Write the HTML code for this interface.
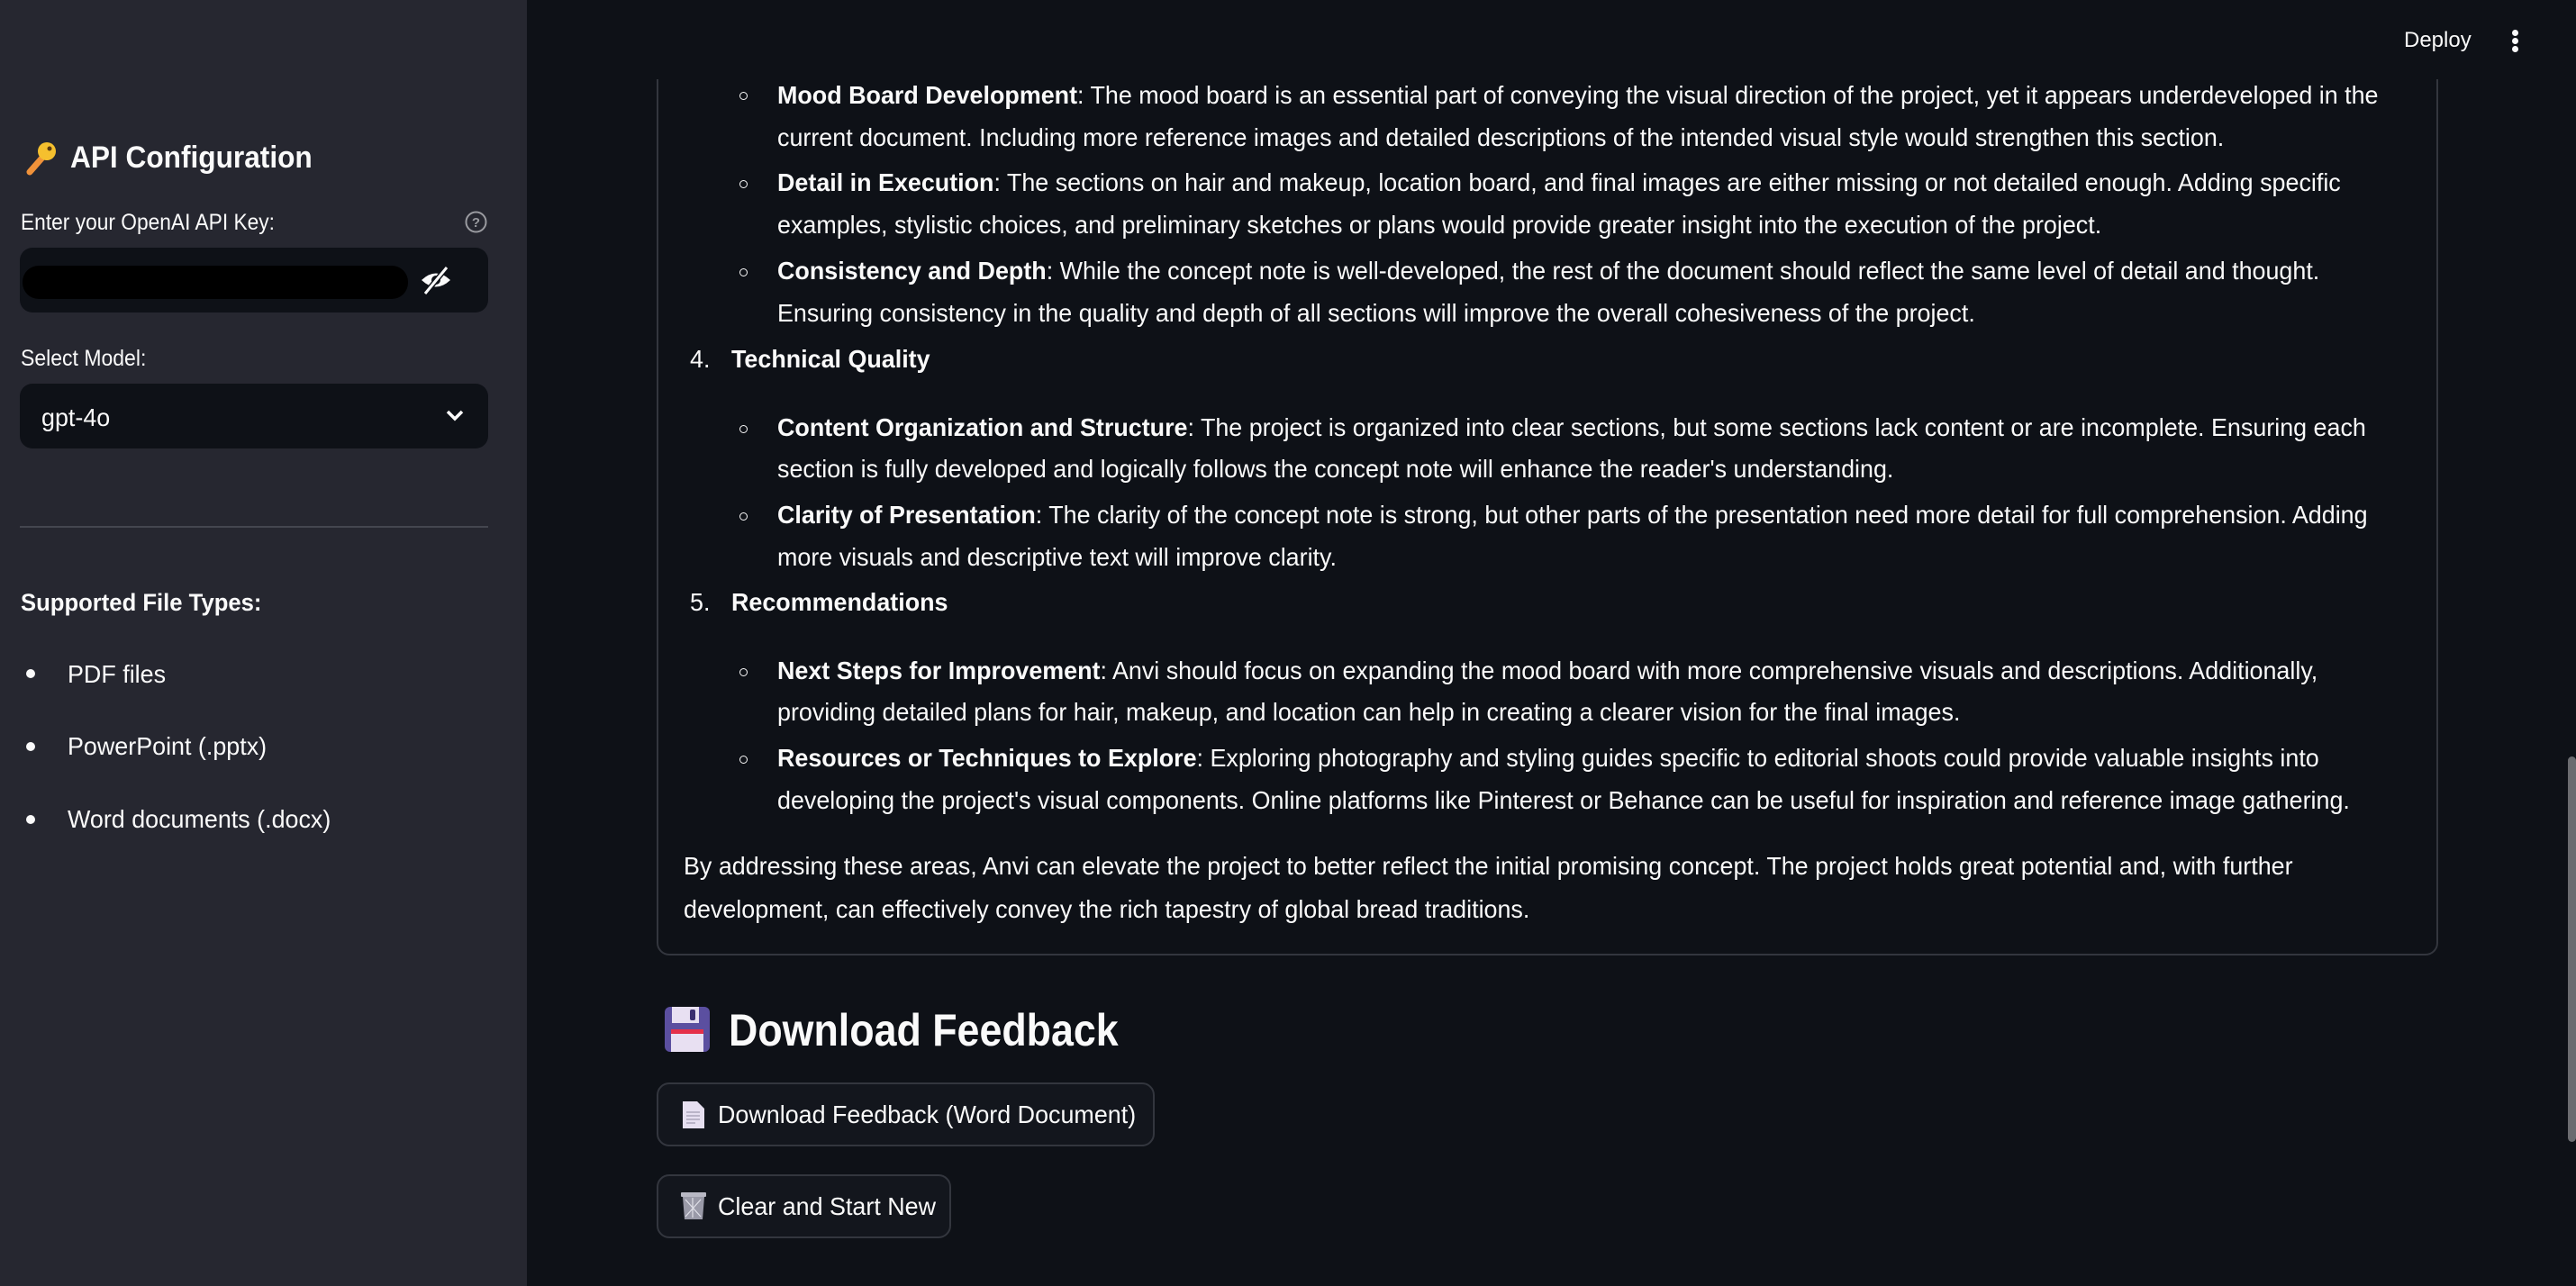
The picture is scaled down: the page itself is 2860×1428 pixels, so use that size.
<!DOCTYPE html>
<html><head><meta charset="utf-8"><style>
*{margin:0;padding:0;box-sizing:border-box}
body{width:2860px;height:1428px;overflow:hidden;background:#0e1117;color:#fafafa;font-family:"Liberation Sans",sans-serif;position:relative}
.a{position:absolute;white-space:nowrap}
.l{position:absolute;white-space:nowrap;font-size:28px;line-height:40px;transform-origin:0 50%;transform:scaleX(.96)}
b{font-weight:bold}
.side{position:absolute;left:0;top:0;width:585px;height:1428px;background:#262730}
.card{position:absolute;left:729px;top:0;width:1978px;height:1061px;border:2px solid #33363e;border-radius:14px}
.hdr{position:absolute;left:585px;top:0;width:2275px;height:88px;background:#0e1117}
.circ{position:absolute;width:9px;height:9px;border:1.5px solid #fafafa;border-radius:50%}
.btn{position:absolute;border:2px solid #33363e;border-radius:14px;background:#13161d}
.sc{transform-origin:0 50%;transform:scaleX(.96)}
</style></head><body>
<div class="side"></div>
<svg class="a" style="left:27px;top:155px" width="36" height="40" viewBox="0 0 36 40"><path d="M6 36 L20 20" stroke="#f0923a" stroke-width="7" stroke-linecap="round"/><circle cx="25" cy="13" r="10" fill="#f5c02e"/><circle cx="28" cy="10" r="2.5" fill="#5a3a10"/></svg>
<div class="a sc" style="left:78px;top:153px;font-size:34px;font-weight:bold;line-height:44px;transform:scaleX(.93)">API Configuration</div>
<div class="a sc" style="left:23px;top:232px;font-size:25px;line-height:30px;transform:scaleX(.91)">Enter your OpenAI API Key:</div>
<svg class="a" style="left:516px;top:234px" width="25" height="25" viewBox="0 0 25 25"><circle cx="12.5" cy="12.5" r="11" fill="none" stroke="#9a9ba0" stroke-width="2"/><text x="12.5" y="18" text-anchor="middle" font-family="Liberation Sans" font-size="15" font-weight="bold" fill="#9a9ba0">?</text></svg>
<div class="a" style="left:22px;top:275px;width:520px;height:72px;background:#0e1117;border-radius:14px"></div>
<div class="a" style="left:25px;top:295px;width:428px;height:37px;background:#000;border-radius:18px"></div>
<svg class="a" style="left:466px;top:294px" width="36" height="34" viewBox="0 0 36 34"><path d="M2 17 Q18 2 34 17 Q18 32 2 17Z" fill="#fafafa"/><circle cx="18" cy="17" r="5" fill="#0e1117"/><path d="M6 32 L30 3" stroke="#0e1117" stroke-width="6"/><path d="M6 32 L30 3" stroke="#fafafa" stroke-width="3"/></svg>
<div class="a sc" style="left:23px;top:383px;font-size:25px;line-height:30px;transform:scaleX(.92)">Select Model:</div>
<div class="a" style="left:22px;top:426px;width:520px;height:72px;background:#0e1117;border-radius:14px"></div>
<div class="a sc" style="left:46px;top:444px;font-size:28px;line-height:40px">gpt-4o</div>
<svg class="a" style="left:494px;top:453px" width="22" height="16" viewBox="0 0 22 16"><path d="M3 4 L11 12 L19 4" fill="none" stroke="#fafafa" stroke-width="3.5"/></svg>
<div class="a" style="left:22px;top:584px;width:520px;height:2px;background:#44464f"></div>
<div class="a sc" style="left:23px;top:652px;font-size:27px;font-weight:bold;line-height:34px;transform:scaleX(.95)">Supported File Types:</div>
<div class="a" style="left:29px;top:743px;width:10px;height:10px;border-radius:50%;background:#fafafa"></div>
<div class="a sc" style="left:75px;top:729px;font-size:28px;line-height:40px">PDF files</div>
<div class="a" style="left:29px;top:824px;width:10px;height:10px;border-radius:50%;background:#fafafa"></div>
<div class="a sc" style="left:75px;top:809px;font-size:28px;line-height:40px">PowerPoint (.pptx)</div>
<div class="a" style="left:29px;top:905px;width:10px;height:10px;border-radius:50%;background:#fafafa"></div>
<div class="a sc" style="left:75px;top:890px;font-size:28px;line-height:40px">Word documents (.docx)</div>

<div class="card"></div>
<div class="hdr"></div>
<div class="a" style="left:2669px;top:30px;font-size:24px;line-height:30px">Deploy</div>
<div class="a" style="left:2789px;top:33px;width:7px;height:7px;border-radius:50%;background:#fafafa"></div>
<div class="a" style="left:2789px;top:42px;width:7px;height:7px;border-radius:50%;background:#fafafa"></div>
<div class="a" style="left:2789px;top:51px;width:7px;height:7px;border-radius:50%;background:#fafafa"></div>

<div class="circ" style="left:821px;top:102px"></div>
<div class="l" style="left:863px;top:86px"><b>Mood Board Development</b>: The mood board is an essential part of conveying the visual direction of the project, yet it appears underdeveloped in the</div>
<div class="l" style="left:863px;top:133px">current document. Including more reference images and detailed descriptions of the intended visual style would strengthen this section.</div>
<div class="circ" style="left:821px;top:200px"></div>
<div class="l" style="left:863px;top:183px"><b>Detail in Execution</b>: The sections on hair and makeup, location board, and final images are either missing or not detailed enough. Adding specific</div>
<div class="l" style="left:863px;top:230px">examples, stylistic choices, and preliminary sketches or plans would provide greater insight into the execution of the project.</div>
<div class="circ" style="left:821px;top:298px"></div>
<div class="l" style="left:863px;top:281px"><b>Consistency and Depth</b>: While the concept note is well-developed, the rest of the document should reflect the same level of detail and thought.</div>
<div class="l" style="left:863px;top:328px">Ensuring consistency in the quality and depth of all sections will improve the overall cohesiveness of the project.</div>
<div class="l" style="left:766px;top:379px">4.</div>
<div class="l" style="left:812px;top:379px"><b>Technical Quality</b></div>
<div class="circ" style="left:821px;top:472px"></div>
<div class="l" style="left:863px;top:455px"><b>Content Organization and Structure</b>: The project is organized into clear sections, but some sections lack content or are incomplete. Ensuring each</div>
<div class="l" style="left:863px;top:501px">section is fully developed and logically follows the concept note will enhance the reader's understanding.</div>
<div class="circ" style="left:821px;top:569px"></div>
<div class="l" style="left:863px;top:552px"><b>Clarity of Presentation</b>: The clarity of the concept note is strong, but other parts of the presentation need more detail for full comprehension. Adding</div>
<div class="l" style="left:863px;top:599px">more visuals and descriptive text will improve clarity.</div>
<div class="l" style="left:766px;top:649px">5.</div>
<div class="l" style="left:812px;top:649px"><b>Recommendations</b></div>
<div class="circ" style="left:821px;top:742px"></div>
<div class="l" style="left:863px;top:725px"><b>Next Steps for Improvement</b>: Anvi should focus on expanding the mood board with more comprehensive visuals and descriptions. Additionally,</div>
<div class="l" style="left:863px;top:771px">providing detailed plans for hair, makeup, and location can help in creating a clearer vision for the final images.</div>
<div class="circ" style="left:821px;top:839px"></div>
<div class="l" style="left:863px;top:822px"><b>Resources or Techniques to Explore</b>: Exploring photography and styling guides specific to editorial shoots could provide valuable insights into</div>
<div class="l" style="left:863px;top:869px">developing the project's visual components. Online platforms like Pinterest or Behance can be useful for inspiration and reference image gathering.</div>
<div class="l" style="left:759px;top:942px">By addressing these areas, Anvi can elevate the project to better reflect the initial promising concept. The project holds great potential and, with further</div>
<div class="l" style="left:759px;top:990px">development, can effectively convey the rich tapestry of global bread traditions.</div>

<svg class="a" style="left:738px;top:1118px" width="50" height="50" viewBox="0 0 50 50"><rect x="0" y="0" width="50" height="50" rx="6" fill="#5b4fa0"/><rect x="8" y="0" width="30" height="18" fill="#e8e0f2"/><rect x="28" y="3" width="6" height="12" rx="2" fill="#3b2f70"/><rect x="7" y="25" width="36" height="25" fill="#e8e0f2"/><rect x="7" y="25" width="36" height="5" fill="#e5304a"/></svg>
<div class="a sc" style="left:809px;top:1114px;font-size:50px;font-weight:bold;line-height:60px;transform:scaleX(.895)">Download Feedback</div>

<div class="btn" style="left:729px;top:1202px;width:553px;height:71px"></div>
<svg class="a" style="left:758px;top:1223px" width="24" height="30" viewBox="0 0 24 30"><path d="M0 0 H16 L24 8 V30 H0Z" fill="#e6dff0"/><path d="M4 12H19M4 16H19M4 20H19M4 24H14" stroke="#a09ab0" stroke-width="1.2"/></svg>
<div class="a sc" style="left:797px;top:1218px;font-size:28px;line-height:40px">Download Feedback (Word Document)</div>
<div class="btn" style="left:729px;top:1304px;width:327px;height:71px"></div>
<svg class="a" style="left:756px;top:1324px" width="28" height="30" viewBox="0 0 28 30"><rect x="0" y="0" width="28" height="5" rx="1" fill="#b8b8c4"/><path d="M2 5 H26 L24 30 H4Z" fill="#9a9aa8"/><path d="M5 8 L22 27 M22 8 L5 27 M13 6 V28" stroke="#e0e0e8" stroke-width="1.2"/></svg>
<div class="a sc" style="left:797px;top:1320px;font-size:28px;line-height:40px">Clear and Start New</div>

<div class="a" style="left:2851px;top:840px;width:9px;height:428px;background:#6b6c70;border-radius:5px"></div>
</body></html>
